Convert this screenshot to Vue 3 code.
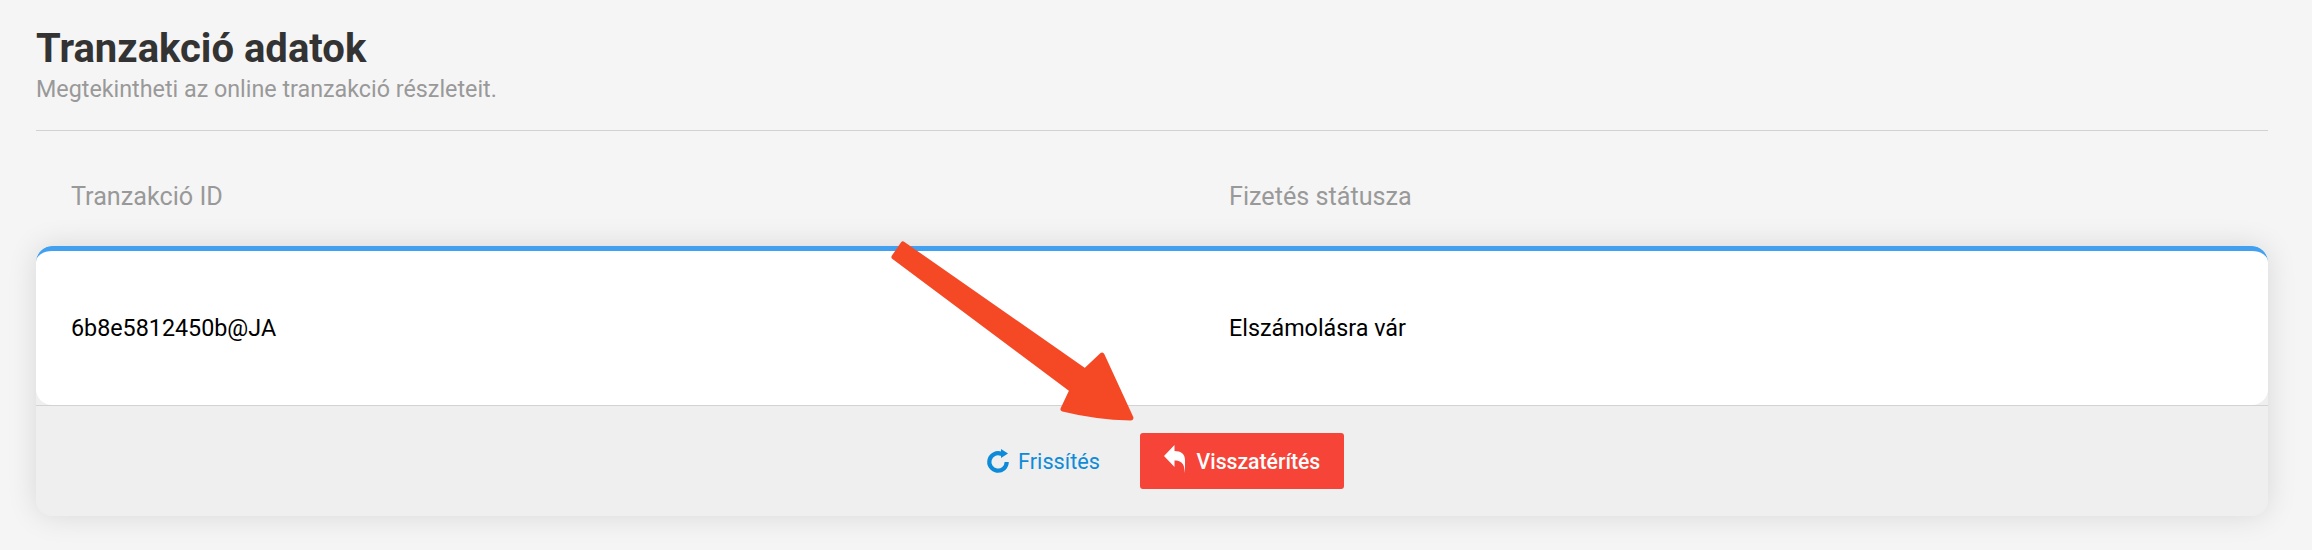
<script setup>
const txId = '6b8e5812450b@JA'
const status = 'Elszámolásra vár'
</script>

<template>
  <div class="page">
    <header class="head">
      <h1>Tranzakció adatok</h1>
      <p>Megtekintheti az online tranzakció részleteit.</p>
    </header>
    <div class="cols labels">
      <span>Tranzakció ID</span>
      <span>Fizetés státusza</span>
    </div>
    <section class="card">
      <div class="cols body">
        <span>{{ txId }}</span>
        <span>{{ status }}</span>
      </div>
      <footer class="foot">
        <button class="refresh">
          <svg viewBox="0 0 24 26" width="24" height="26">
            <path fill="none" stroke="currentColor" stroke-width="4.2" d="M15.5 6 A8.7 8.7 0 1 0 20.7 14" />
            <path fill="currentColor" d="M15 1 L22 5.5 L15 10 Z" />
          </svg>
          Frissítés
        </button>
        <button class="refund">
          <svg class="reply" viewBox="0 0 21 29" width="21" height="29">
            <path fill="currentColor" d="M0 11 L10.5 0 V6 C17 6 21 9 21 15 V22 L20 28 V22 C19 17 15 15.5 10.5 15.5 V22 Z" />
          </svg>
          Visszatérítés
        </button>
      </footer>
    </section>
    <svg class="arrow" viewBox="0 0 260 190" width="260" height="190">
      <path fill="#f54926" stroke="#f54926" stroke-width="5" stroke-linejoin="round" d="M13 4 L4 17 L182 150 L173 169 Q205 177 241 178 L212 115 L195 131 Z" />
    </svg>
  </div>
</template>

<style>
html, body { margin: 0; background: #f5f5f5; }
</style>

<style scoped>
.page {
  position: relative;
  box-sizing: border-box;
  width: 2312px;
  height: 550px;
  padding: 26px 44px 0 36px;
  background: #f5f5f5;
  font-family: Roboto, "Liberation Sans", sans-serif;
}
.head {
  height: 104px;
  border-bottom: 1px solid #d2d2d2;
}
h1 {
  margin: 0;
  font-size: 40px;
  line-height: 46px;
  font-weight: 700;
  color: #333;
}
p {
  margin: 3px 0 0;
  font-size: 23.3px;
  line-height: 28px;
  color: #999;
}
.cols {
  display: grid;
  grid-template-columns: 1158px 1fr;
  padding-left: 35px;
}
.labels {
  margin-top: 50px;
  height: 65px;
  font-size: 25.2px;
  line-height: 32px;
  color: #999;
}
.card {
  overflow: hidden;
  height: 270px;
  border-radius: 16px;
  background: #efefef;
  box-shadow: 0 0 30px rgba(0, 0, 0, .12);
}
.body {
  box-sizing: border-box;
  height: 159px;
  align-items: center;
  border-top: 5px solid #42a0f0;
  border-radius: 16px;
  background: #fff;
  font-size: 23.3px;
  color: #000;
}
.foot {
  display: flex;
  align-items: center;
  justify-content: center;
  height: 111px;
  box-sizing: border-box;
  border-top: 1px solid #d2d2d2;
  padding-left: 26px;
}
button {
  display: flex;
  align-items: center;
  border: 0;
  font-family: Roboto, sans-serif;
}
.refresh {
  gap: 8px;
  padding: 0 40px 0 0;
  background: none;
  color: #0d8bd8;
  font-size: 21.7px;
  font-weight: 400;
}
.refund {
  gap: 12px;
  justify-content: center;
  width: 204px;
  height: 56px;
  border-radius: 3px;
  background: #f64438;
  color: #fff;
  font-size: 21.2px;
  font-weight: 500;
}
.reply {
  margin-top: -3px;
}
.arrow {
  position: absolute;
  left: 890px;
  top: 240px;
}
</style>
